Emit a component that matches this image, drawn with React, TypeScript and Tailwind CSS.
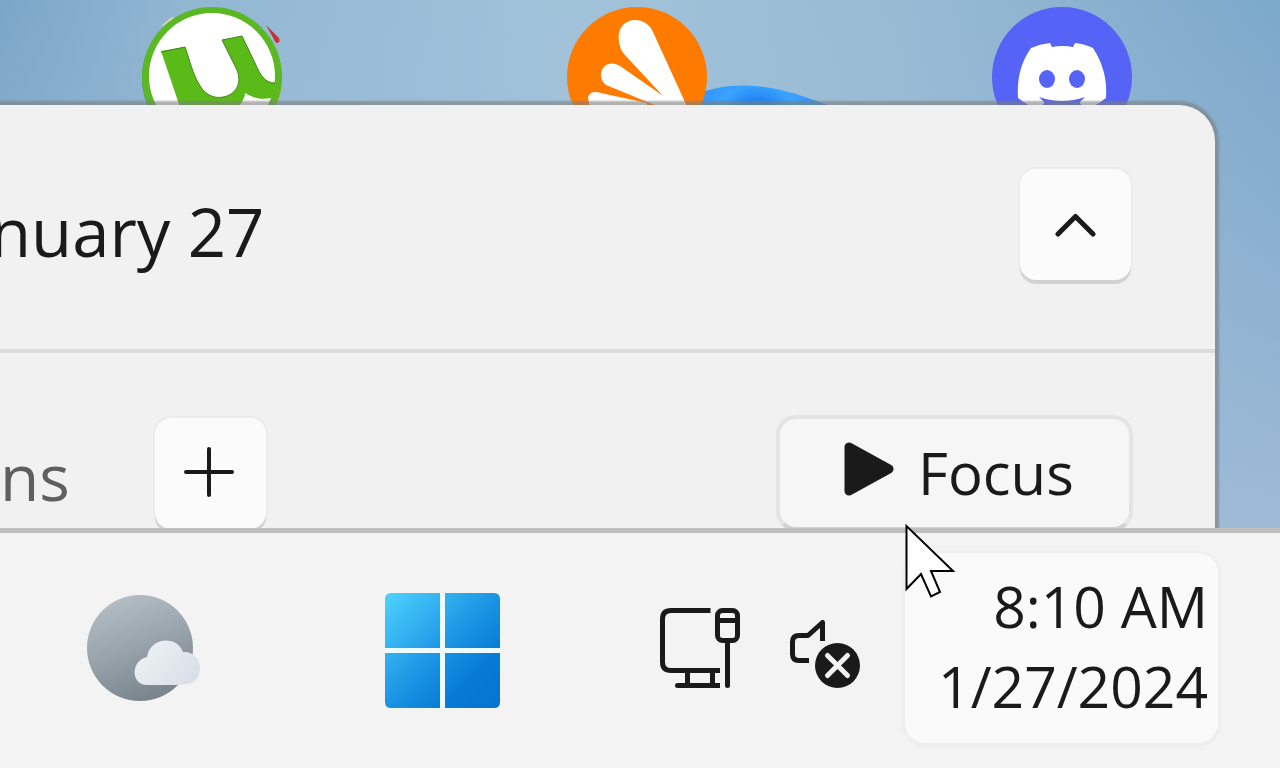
function TorrentIcon() {
  return (
    <svg viewBox="0 0 140 140" className="w-[140px] h-[140px] shrink-0 overflow-visible" aria-hidden="true">
      <path d="M124 18 L137 31 Q139 36 134 36 Z" fill="#c8303c" />
      <path d="M18 20 L30 10 L36 12 Z" fill="#e0d6c2" />
      <circle cx="71" cy="71" r="69" fill="#e0b020" />
      <circle cx="69" cy="71" r="69" fill="#279b5c" />
      <circle cx="70" cy="70" r="70" fill="#5cb822" />
      <circle cx="70" cy="69" r="63" fill="#fff" />
      <path
        d="M19 44 L43 40 C48 54 50 65 57 77 C65 92 79 93 89 87 C99 80 98 69 94 61 L80 33 L100 29 L113 56 C118 68 123 76 133 76 L134 84 L129 91 C120 93 111 91 103 86 C103 91 100 95 96 100 L90 115 L42 112 Z"
        fill="#5abb18"
      />
      <path
        d="M19 45 L43 40 C48 54 50 65 57 77 C65 92 79 93 89 87 C99 80 98 69 94 61 L80 33 L100 29 L113 56 C118 68 123 76 133 76"
        fill="none"
        stroke="#47831f"
        strokeWidth="1"
      />
    </svg>
  );
}

function AvastIcon() {
  return (
    <svg viewBox="0 0 140 140" className="w-[140px] h-[140px] shrink-0 overflow-visible" aria-hidden="true">
      <defs>
        <radialGradient id="orb" gradientUnits="userSpaceOnUse" cx="190" cy="118" r="85">
          <stop offset="0" stopColor="#1368d8" />
          <stop offset="0.25" stopColor="#1c7df0" />
          <stop offset="0.48" stopColor="#3aa3ff" />
          <stop offset="1" stopColor="#2c86f5" />
        </radialGradient>
      </defs>
      <path d="M120 92 C155 73 200 73 262 99 L262 110 L120 110 Z" fill="url(#orb)" />
      <circle cx="70" cy="70" r="70" fill="#ff7b00" />
      <path d="M52 35 C48 10 78 6 86 25 L123 106 L112 106 L57 47 Q53 42 52 35 Z" fill="#fff" />
      <path d="M34 68 C34 58 44 53 53 59 L102 93 L109 103 L95 101 L39 78 Q34 74 34 68 Z" fill="#fff" />
      <path d="M21 91 C22 85 28 84 34 86 L80 96 L80 106 L24 106 Z" fill="#fff" />
    </svg>
  );
}

function DiscordIcon() {
  return (
    <svg viewBox="0 0 140 140" className="w-[140px] h-[140px] shrink-0" aria-hidden="true">
      <circle cx="70" cy="70" r="70" fill="#5663f7" />
      <path
        d="M39 41 Q48 37 58 36 L60 40 Q70 38 81 40 L83 36 Q93 37 101 41 Q116 64 114 91 Q104 99 93 102 L86 94 L92 91 Q70 99 48 91 L54 94 L47 102 Q36 99 26 91 Q24 62 39 41 Z"
        fill="#fff"
      />
      <path d="M47 90 Q70 98 93 90 L88 95 L88 108 L52 108 L52 95 Z" fill="#5663f7" />
      <ellipse cx="55" cy="72" rx="8" ry="9" fill="#5663f7" />
      <ellipse cx="85" cy="72" rx="8" ry="9" fill="#5663f7" />
    </svg>
  );
}

function WeatherIcon() {
  return (
    <svg viewBox="0 0 115 107" className="w-[115px] h-[107px]" aria-hidden="true">
      <defs>
        <linearGradient id="moon" x1="0.3" y1="0" x2="0.65" y2="1">
          <stop offset="0" stopColor="#b3bec6" />
          <stop offset="0.5" stopColor="#98a2aa" />
          <stop offset="1" stopColor="#78828b" />
        </linearGradient>
        <linearGradient id="cloud" x1="0" y1="0" x2="1" y2="0.6">
          <stop offset="0" stopColor="#f0f4f6" />
          <stop offset="0.6" stopColor="#e3e8ec" />
          <stop offset="1" stopColor="#dcdfea" />
        </linearGradient>
      </defs>
      <circle cx="53" cy="53" r="53" fill="url(#moon)" />
      <path
        d="M60 90 C44 90 43 66 60 62 C63 42 90 40 96 57 C118 56 118 88 100 89 Q95 90 88 90 Z"
        fill="url(#cloud)"
      />
    </svg>
  );
}

function WindowsIcon() {
  return (
    <svg viewBox="0 0 115 115" className="w-[115px] h-[115px]" aria-hidden="true">
      <defs>
        <linearGradient id="win" gradientUnits="userSpaceOnUse" x1="0" y1="0" x2="115" y2="115">
          <stop offset="0" stopColor="#4fd3ff" />
          <stop offset="0.5" stopColor="#1b94e4" />
          <stop offset="0.75" stopColor="#067bd5" />
          <stop offset="1" stopColor="#0573cf" />
        </linearGradient>
      </defs>
      <path d="M6 0 H55 V55 H0 V6 Q0 0 6 0 Z" fill="url(#win)" />
      <path d="M60 0 H109 Q115 0 115 6 V55 H60 Z" fill="url(#win)" />
      <path d="M0 60 H55 V115 H6 Q0 115 0 109 Z" fill="url(#win)" />
      <path d="M60 60 H115 V109 Q115 115 109 115 H60 Z" fill="url(#win)" />
      <path d="M55 0 H60 V115 H55 Z M0 55 H115 V60 H0 Z" fill="#ecfcfd" />
    </svg>
  );
}

function NetworkIcon() {
  return (
    <svg viewBox="0 0 80 82" className="w-20 h-[82px]" fill="none" stroke="#1a1a1a" strokeWidth="5" aria-hidden="true">
      <path d="M50.500 3.500 H11 Q2.500 3.500 2.500 12 V55 Q2.500 63.500 11 63.500 H60" />
      <path d="M27.500 64 V78 M52.500 64 V78" />
      <path d="M18 78.500 H60" />
      <circle cx="17.500" cy="78.500" r="2.500" fill="#1a1a1a" stroke="none" />
      <rect x="57.500" y="3.500" width="20" height="30" rx="5" />
      <path d="M57 13.500 H78" />
      <path d="M67.500 34 V78.500" strokeLinecap="round" />
    </svg>
  );
}

function MutedIcon() {
  return (
    <svg viewBox="0 0 70 68" className="w-[70px] h-[68px]" fill="none" stroke="#1a1a1a" strokeWidth="5" aria-hidden="true">
      <path d="M19 40.500 H9 Q2.500 40.500 2.500 34 V22 Q2.500 15.500 9 15.500 H18 L32.500 2.500 V21" strokeLinejoin="round" />
      <circle cx="47.500" cy="45.500" r="22.500" fill="#1a1a1a" stroke="none" />
      <path d="M37.500 35.500 L57.500 55.500 M57.500 35.500 L37.500 55.500" stroke="#f3f3f3" strokeLinecap="round" />
    </svg>
  );
}

function Pointer() {
  return (
    <svg
      viewBox="0 0 52 78"
      className="absolute left-0 -top-[30px] w-[52px] h-[78px] pointer-events-none"
      aria-hidden="true"
    >
      <path
        d="M1.500 3 V66 L16 51 L26 73.500 L35 69 L26 48 H48 Z"
        fill="#fff"
        stroke="#000"
        strokeWidth="2"
      />
    </svg>
  );
}

function CalendarFlyout() {
  return (
    <section className="relative flex-1 mr-[65px] bg-[#f1f1f1] rounded-tr-[36px] shadow-[0_0_2px_4px_rgba(125,125,125,0.6)]">
      <header className="flex items-start justify-between h-[248px] pt-16 pr-[84px] border-b-4 border-[#dddddd]">
        <h1 className="-ml-[10px] pt-[14px] text-[67px] leading-[96px] whitespace-nowrap">nuary 27</h1>
        <button
          aria-label="Collapse calendar"
          className="flex items-center justify-center w-[111px] h-[111px] rounded-2xl bg-[#fbfbfb] shadow-[0_4px_0_0_#d2d2d2,0_0_0_2px_#ececec]"
        >
          <svg viewBox="0 0 42 26" className="w-[42px] h-[26px]" aria-hidden="true">
            <path d="M3 22 L20.500 4.500 L38 22" fill="none" stroke="#1a1a1a" strokeWidth="5" strokeLinecap="round" strokeLinejoin="round" />
          </svg>
        </button>
      </header>

      {/* Focus session row */}
      <div className="flex items-start justify-between pt-[62px] pr-[82px]">
        <div className="flex items-start">
          <span className="w-[155px] pt-[18px] text-[64px] leading-[88px] text-[#5f5f5f]">ns</span>
          <button
            aria-label="Increase focus time"
            className="flex items-center justify-center w-[111px] h-[111px] mt-[3px] pr-1 pb-1 rounded-2xl bg-[#fbfbfb] shadow-[0_4px_0_0_#d2d2d2,0_0_0_2px_#ececec]"
          >
            <svg viewBox="0 0 50 50" className="w-[50px] h-[50px]" aria-hidden="true">
              <path d="M2 25 H48 M25 2 V48" fill="none" stroke="#1a1a1a" strokeWidth="4" strokeLinecap="round" />
            </svg>
          </button>
        </div>
        <button className="flex items-center w-[357px] h-[116px] pl-16 gap-6 rounded-[20px] border-4 border-[#e4e4e4] border-b-[#d2d2d2] bg-[#f6f6f6] text-[58px] leading-[80px]">
          <svg viewBox="0 0 50 62" className="w-[50px] h-[62px]" aria-hidden="true">
            <path d="M5 5 V49 L45 27 Z" fill="#1a1a1a" stroke="#1a1a1a" strokeWidth="9" strokeLinejoin="round" />
          </svg>
          Focus
        </button>
      </div>
    </section>
  );
}

function Taskbar() {
  return (
    <footer className="relative flex items-center shrink-0 pt-5 pb-[25px] pl-[87px] pr-[62px] border-t-[5px] border-[#bebebe] bg-[#f3f3f3]">
      <button aria-label="Weather">
        <WeatherIcon />
      </button>
      <button aria-label="Start" className="ml-[183px] mt-1">
        <WindowsIcon />
      </button>
      <div className="flex items-center ml-auto">
        <button aria-label="Network" className="mr-[50px]">
          <NetworkIcon />
        </button>
        <button aria-label="Volume muted" className="mt-3 mr-[45px]">
          <MutedIcon />
        </button>
        <div className="relative">
          <button className="w-[313px] h-[190px] pr-[10px] pb-1 rounded-[20px] bg-[#fafafa] shadow-[0_1px_1px_3px_#eeeeee] text-right text-[57px] leading-[80px] whitespace-nowrap">
            <time className="block">8:10 AM</time>
            <time className="block">1/27/2024</time>
          </button>
          <Pointer />
        </div>
      </div>
    </footer>
  );
}

export default function App() {
  return (
    <div className="flex flex-col h-screen overflow-hidden text-[#1a1a1a] font-['Segoe_UI','Open_Sans',sans-serif] bg-[linear-gradient(180deg,rgba(162,188,216,0)_0%,rgba(162,188,216,0.9)_70%),linear-gradient(90deg,#7ba6c8_0%,#92b7d3_15%,#a1c3da_45%,#98bbd4_70%,#7ca8ca_100%)]">
      <main className="flex flex-col flex-1 min-h-0 overflow-hidden">
        <div className="flex justify-between h-[105px] pt-[7px] pl-[142px] pr-[148px]">
          <TorrentIcon />
          <AvastIcon />
          <DiscordIcon />
        </div>
        <CalendarFlyout />
      </main>
      <Taskbar />
    </div>
  );
}
